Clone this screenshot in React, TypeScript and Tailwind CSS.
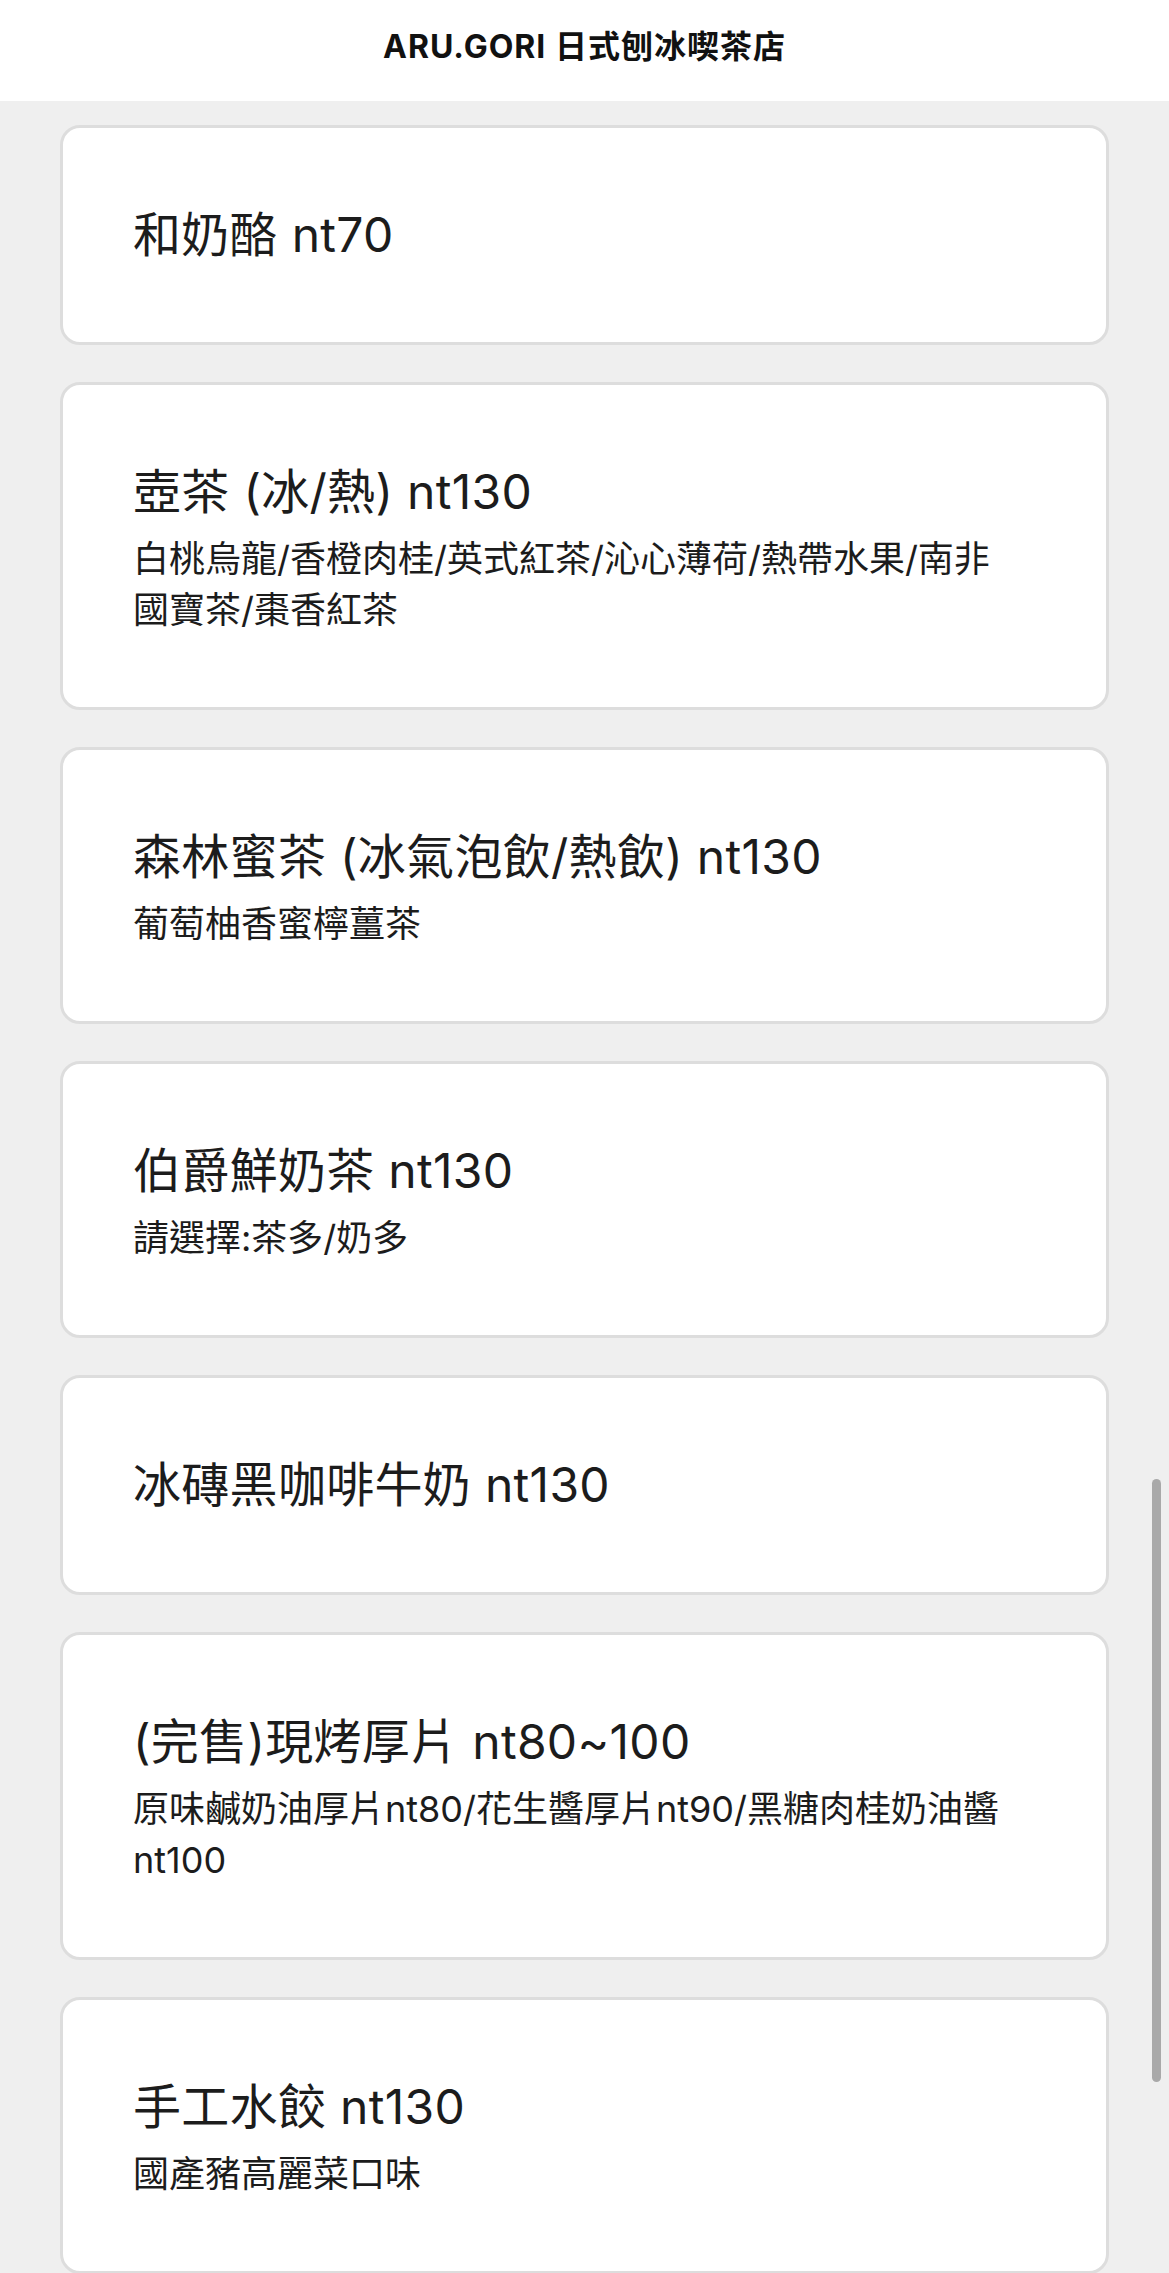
import React from 'react';

type MenuItem = {
  title: string;
  description?: string;
};

const items: MenuItem[] = [
  { title: '和奶酪 nt70' },
  {
    title: '壺茶 (冰/熱) nt130',
    description: '白桃烏龍/香橙肉桂/英式紅茶/沁心薄荷/熱帶水果/南非國寶茶/棗香紅茶',
  },
  { title: '森林蜜茶 (冰氣泡飲/熱飲) nt130', description: '葡萄柚香蜜檸薑茶' },
  { title: '伯爵鮮奶茶 nt130', description: '請選擇:茶多/奶多' },
  { title: '冰磚黑咖啡牛奶 nt130' },
  {
    title: '(完售)現烤厚片 nt80~100',
    description: '原味鹹奶油厚片nt80/花生醬厚片nt90/黑糖肉桂奶油醬nt100',
  },
  { title: '手工水餃 nt130', description: '國產豬高麗菜口味' },
];

const font = "font-['Inter','Noto_Sans_CJK_TC',sans-serif]";

const App: React.FC = () => {
  return (
    <div className={`relative min-h-screen bg-[#efefef] text-[#1c1c1c] ${font}`}>
      {/* ヘッダー */}
      <header className="flex h-[101px] items-center justify-center bg-white pb-[8px]">
        <h1 className="text-[32px] font-bold tracking-[1px] text-[#111]">
          ARU.GORI 日式刨冰喫茶店
        </h1>
      </header>

      {/* メニュー */}
      <main className="flex flex-col gap-[37px] px-[60px] pt-[24px] pb-[8px]">
        {items.map((item, index) => (
          <div
            key={index}
            className="flex flex-col gap-[6px] rounded-[20px] border-[3px] border-[#dddddd] bg-white py-[71px] pr-[95px] pl-[70px]"
          >
            <h2 className="text-[48px] leading-[72px] font-normal tracking-[0.3px]">{item.title}</h2>
            {item.description && (
              <p className="text-[36px] leading-[51px]">{item.description}</p>
            )}
          </div>
        ))}
      </main>

      {/* スクロールバー */}
      <div className="absolute top-[1479px] right-[8px] h-[603px] w-[9px] rounded-full bg-[#a9a9a9]"></div>
    </div>
  );
};

export default App;
